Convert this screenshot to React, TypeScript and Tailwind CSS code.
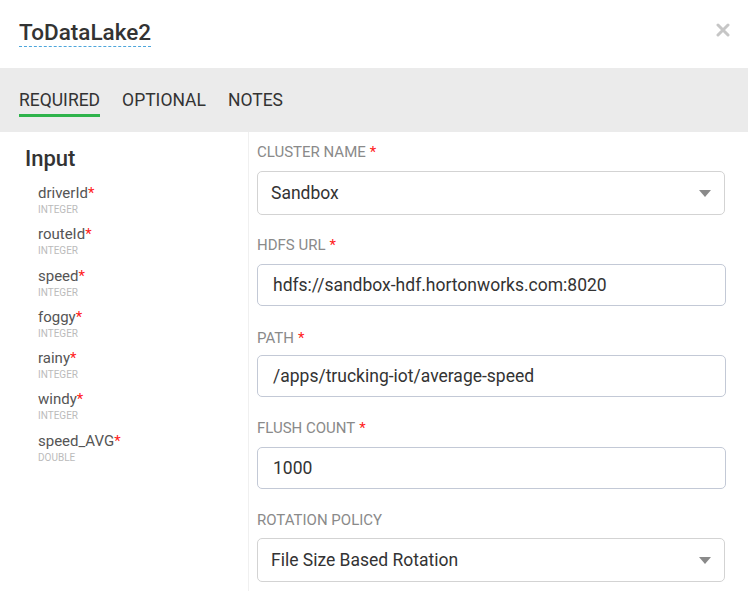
import React from "react";

const fields = [
  { name: "driverId", type: "INTEGER" },
  { name: "routeId", type: "INTEGER" },
  { name: "speed", type: "INTEGER" },
  { name: "foggy", type: "INTEGER" },
  { name: "rainy", type: "INTEGER" },
  { name: "windy", type: "INTEGER" },
  { name: "speed_AVG", type: "DOUBLE" },
];

function Label({ text, req = true, mt }: { text: string; req?: boolean; mt: string }) {
  return (
    <div className={`${mt} h-[18px] text-[15px] leading-[18px] text-[#8a8a8a]`}>
      {text}
      {req && <span className="ml-[4px] text-[#ff2020]">*</span>}
    </div>
  );
}

function Select({ value, mt }: { value: string; mt: string }) {
  return (
    <div className={`${mt} flex h-[44px] w-[468px] items-center justify-between rounded-[5px] border border-[#d3d3d3] pl-[13px] pr-[13px]`}>
      <span className="text-[17.5px] text-[#333]">{value}</span>
      <svg width="12" height="7" viewBox="0 0 12 7">
        <path d="M0 0 L12 0 L6 7 Z" fill="#8a8a8a" />
      </svg>
    </div>
  );
}

function Input({ value, mt }: { value: string; mt: string }) {
  return (
    <div className={`${mt} flex h-[42px] w-[469px] items-center rounded-[5px] border border-[#c3c9d6] pl-[15px]`}>
      <span className="text-[17.5px] text-[#333]">{value}</span>
    </div>
  );
}

export default function App() {
  return (
    <div
      className="flex h-[591px] w-[748px] flex-col overflow-hidden bg-white"
      style={{ fontFamily: "Roboto, 'Liberation Sans', sans-serif" }}
    >
      <div className="flex h-[68px] shrink-0 items-start justify-between">
        <div className="ml-[19px] mt-[19px] border-b border-dashed border-[#4ea6dc] pb-[1px] text-[22.5px] font-medium leading-[26px] text-[#333]">
          ToDataLake2
        </div>
        <svg className="mr-[18px] mt-[23px]" width="14" height="14" viewBox="0 0 14 14">
          <path d="M2 2 L12 12 M12 2 L2 12" stroke="#c6c6c6" strokeWidth="3" strokeLinecap="round" />
        </svg>
      </div>
      <div className="flex h-[64px] shrink-0 items-start bg-[#ebebeb] pl-[19px]">
        <div className="mt-[21px] flex flex-col">
          <span className="text-[17.5px] leading-[22px] text-[#333]">REQUIRED</span>
          <div className="mt-[3px] h-[3px] bg-[#2eb34b]" />
        </div>
        <span className="ml-[22px] mt-[21px] text-[17.5px] leading-[22px] text-[#333]">OPTIONAL</span>
        <span className="ml-[22px] mt-[21px] text-[17.5px] leading-[22px] text-[#333]">NOTES</span>
      </div>
      <div className="flex flex-1">
        <div className="w-[249px] shrink-0 border-r border-[#f0f0f0] pl-[25px] pt-[14px]">
          <div className="text-[22px] font-medium leading-[26px] text-[#333]">Input</div>
          <div className="mt-[12px] flex flex-col pl-[13px]">
            {fields.map((f) => (
              <div key={f.name} className="h-[41.3px]">
                <div className="text-[15px] leading-[18px] text-[#555]">
                  {f.name}
                  <span className="text-[#ff2020]">*</span>
                </div>
                <div className="mt-[2px] text-[10px] leading-[12px] text-[#bbb]">{f.type}</div>
              </div>
            ))}
          </div>
        </div>
        <div className="flex flex-col pl-[8px] pt-[11px]">
          <Label text="CLUSTER NAME" mt="mt-0" />
          <Select value="Sandbox" mt="mt-[10px]" />
          <Label text="HDFS URL" mt="mt-[21px]" />
          <Input value="hdfs://sandbox-hdf.hortonworks.com:8020" mt="mt-[10px]" />
          <Label text="PATH" mt="mt-[23px]" />
          <Input value="/apps/trucking-iot/average-speed" mt="mt-[8px]" />
          <Label text="FLUSH COUNT" mt="mt-[22px]" />
          <Input value="1000" mt="mt-[10px]" />
          <Label text="ROTATION POLICY" req={false} mt="mt-[22px]" />
          <Select value="File Size Based Rotation" mt="mt-[9px]" />
        </div>
      </div>
    </div>
  );
}
